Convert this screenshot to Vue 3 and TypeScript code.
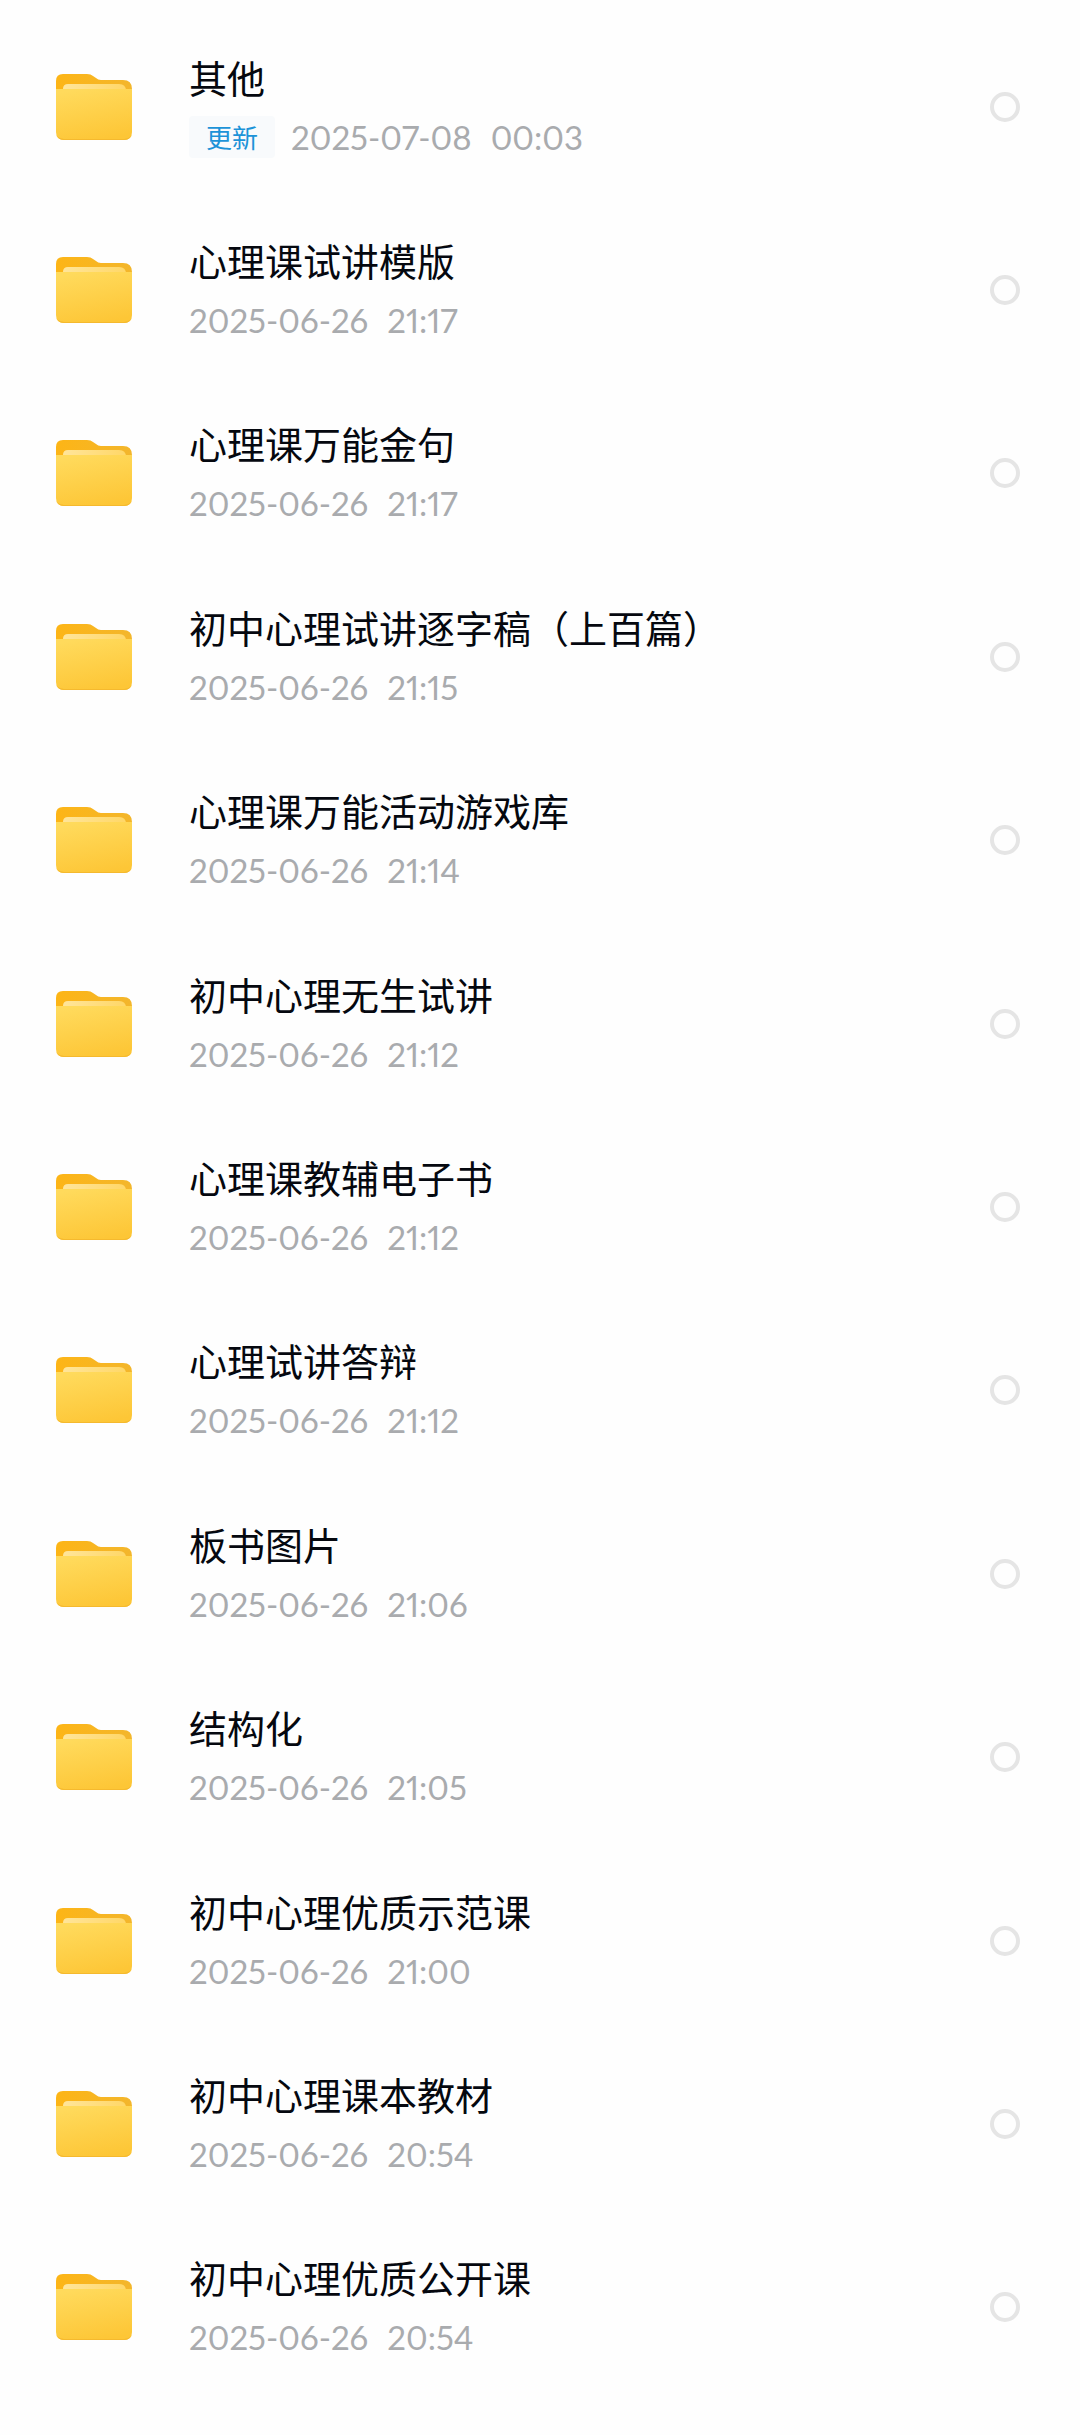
<script setup lang="ts">
import { ref } from 'vue'

interface Folder {
  name: string
  date: string
  time: string
  updated?: boolean
}

const folders: Folder[] = [
  { name: '其他', date: '2025-07-08', time: '00:03', updated: true },
  { name: '心理课试讲模版', date: '2025-06-26', time: '21:17' },
  { name: '心理课万能金句', date: '2025-06-26', time: '21:17' },
  { name: '初中心理试讲逐字稿（上百篇）', date: '2025-06-26', time: '21:15' },
  { name: '心理课万能活动游戏库', date: '2025-06-26', time: '21:14' },
  { name: '初中心理无生试讲', date: '2025-06-26', time: '21:12' },
  { name: '心理课教辅电子书', date: '2025-06-26', time: '21:12' },
  { name: '心理试讲答辩', date: '2025-06-26', time: '21:12' },
  { name: '板书图片', date: '2025-06-26', time: '21:06' },
  { name: '结构化', date: '2025-06-26', time: '21:05' },
  { name: '初中心理优质示范课', date: '2025-06-26', time: '21:00' },
  { name: '初中心理课本教材', date: '2025-06-26', time: '20:54' },
  { name: '初中心理优质公开课', date: '2025-06-26', time: '20:54' },
]

const selected = ref<string[]>([])
</script>

<template>
  <svg class="defs" width="0" height="0" aria-hidden="true">
    <defs>
      <linearGradient id="folder-back" x1="0" y1="0" x2="1" y2="0">
        <stop offset="0" stop-color="#fdb516" />
        <stop offset="1" stop-color="#f3b62c" />
      </linearGradient>
      <linearGradient id="folder-paper" x1="0" y1="0" x2="1" y2="0">
        <stop offset="0" stop-color="#ffe59a" />
        <stop offset="1" stop-color="#ffd767" />
      </linearGradient>
      <linearGradient id="folder-front" x1="0.3" y1="0" x2="0.6" y2="1">
        <stop offset="0" stop-color="#ffda5c" />
        <stop offset="1" stop-color="#fdc636" />
      </linearGradient>
    </defs>
  </svg>
  <ul class="list">
    <li v-for="(folder, i) in folders" :key="folder.name" class="row">
      <svg class="icon" viewBox="0 0 76 68" aria-hidden="true">
        <path
          d="M0 20V8Q0 1 7 1H31Q35 1 37 3L40 5Q42 7 45 7H67Q76 7 76 16V24H0Z"
          fill="url(#folder-back)"
        />
        <path d="M7 20V16Q7 11 12 11H63Q70 11 70 18V20Z" fill="url(#folder-paper)" />
        <path
          d="M0 16H76V59Q76 67 68 67H8Q0 67 0 59Z"
          fill="url(#folder-front)"
        />
        <path d="M1 63Q3 67 8 67H68Q73 67 75 63Q72 66 68 66H8Q4 66 1 63Z" fill="#f5b92e" />
      </svg>
      <div class="info">
        <label class="name" :for="`folder-${i}`">{{ folder.name }}</label>
        <div class="meta">
          <span v-if="folder.updated" class="badge">更新</span>
          <time class="stamp" :datetime="`${folder.date}T${folder.time}`">
            <span>{{ folder.date }}</span>
            <span>{{ folder.time }}</span>
          </time>
        </div>
      </div>
      <input :id="`folder-${i}`" v-model="selected" class="check" type="checkbox" :value="folder.name" />
    </li>
  </ul>
</template>

<style>
body {
  margin: 0;
  background: #fefefe;
}
</style>

<style scoped>
.defs {
  position: absolute;
}

.list {
  display: grid;
  grid-auto-rows: minmax(160px, 1fr);
  box-sizing: border-box;
  min-height: 100vh;
  margin: 0;
  padding: 15px 60px 36px 56px;
  list-style: none;
  font-family: 'Noto Sans CJK SC', sans-serif;
}

.row {
  display: flex;
  align-items: center;
}

.icon {
  flex: none;
  width: 76px;
  height: 68px;
  margin-right: 57px;
}

.info {
  display: flex;
  flex: 1;
  flex-direction: column;
  align-items: flex-start;
  gap: 10px;
  min-width: 0;
}

.name {
  color: #05080f;
  font-size: 38px;
  line-height: 50px;
}

.meta {
  display: flex;
  align-items: center;
  gap: 16px;
  height: 50px;
}

.badge {
  padding: 0 17px;
  border-radius: 4px;
  background: #f8fafc;
  color: #1c93d8;
  font-size: 26px;
  line-height: 42px;
}

.stamp {
  display: flex;
  gap: 19px;
  color: #a9abae;
  font-family: Lato, sans-serif;
  font-size: 33px;
  font-variant-numeric: proportional-nums;
  line-height: 50px;
}

.check {
  flex: none;
  box-sizing: border-box;
  width: 30px;
  height: 30px;
  margin: 0;
  border: 4px solid #e5e5e5;
  border-radius: 50%;
  appearance: none;
}

.check:checked {
  border-color: #1c93d8;
  background: #1c93d8;
}
</style>
